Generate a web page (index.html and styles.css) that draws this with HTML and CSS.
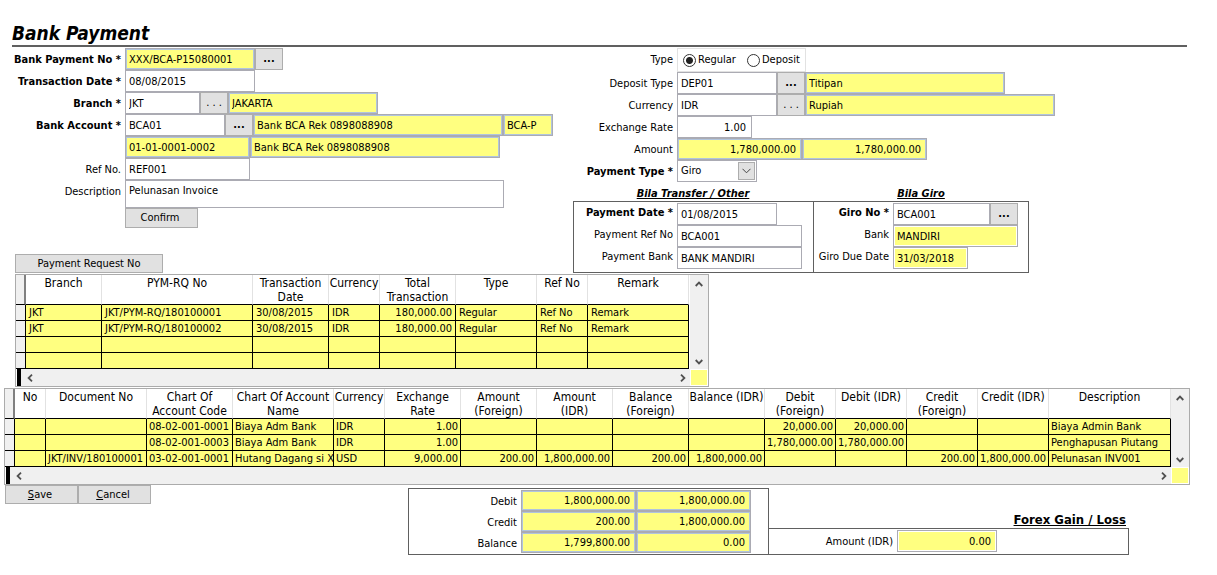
FILE: index.html
```
<!DOCTYPE html>
<html lang="en">
<head>
<meta charset="utf-8">
<title>Bank Payment</title>
<link rel="stylesheet" href="styles.css">
</head>
<body>
<header class="page-header"><h1>Bank Payment</h1></header>
<form>
<div class="top">
  <section class="left">
    <div class="form">
      <div class="row"><label class="label bold" for="no">Bank Payment No *</label><input class="field locked w130" id="no" value="XXX/BCA-P15080001" readonly><button type="button" class="btn dots bold">...</button></div>
      <div class="row"><label class="label bold" for="date">Transaction Date *</label><input class="field w130" id="date" value="08/08/2015"></div>
      <div class="row"><label class="label bold" for="branch">Branch *</label><input class="field w75" id="branch" value="JKT"><button type="button" class="btn dots">. . .</button><input class="field locked w150" aria-label="Branch name" value="JAKARTA" readonly></div>
      <div class="row"><label class="label bold" for="acct">Bank Account *</label><input class="field w100" id="acct" value="BCA01"><button type="button" class="btn dots bold">...</button><input class="field locked w250" aria-label="Bank account name" value="Bank BCA Rek 0898088908" readonly><input class="field locked w50" aria-label="Bank account code" value="BCA-P" readonly></div>
      <div class="row"><span class="label"></span><input class="field locked w125" aria-label="Chart of account" value="01-01-0001-0002" readonly><input class="field locked w250" aria-label="Chart of account name" value="Bank BCA Rek 0898088908" readonly></div>
      <div class="row"><label class="label" for="ref">Ref No.</label><input class="field w125" id="ref" value="REF001"></div>
      <div class="row"><label class="label" for="desc">Description</label><textarea class="field memo" id="desc">Pelunasan Invoice</textarea></div>
      <div class="row"><span class="label"></span><button type="button" class="btn confirm">Confirm</button></div>
    </div>
    <button type="button" class="btn request">Payment Request No</button>
  </section>

  <section class="right">
    <div class="row"><span class="label">Type</span>
      <div class="radios" role="radiogroup" aria-label="Type">
        <label><input type="radio" name="type" checked>Regular</label>
        <label><input type="radio" name="type">Deposit</label>
      </div>
    </div>
    <div class="row"><label class="label" for="dep">Deposit Type</label><input class="field w100" id="dep" value="DEP01"><button type="button" class="btn dots bold">...</button><input class="field locked w200" aria-label="Deposit type name" value="Titipan" readonly></div>
    <div class="row"><label class="label" for="cur">Currency</label><input class="field w100" id="cur" value="IDR"><button type="button" class="btn dots">. . .</button><input class="field locked w250" aria-label="Currency name" value="Rupiah" readonly></div>
    <div class="row"><label class="label" for="rate">Exchange Rate</label><input class="field num w75" id="rate" value="1.00"></div>
    <div class="row"><label class="label" for="amt">Amount</label><input class="field locked num w125" id="amt" value="1,780,000.00" readonly><input class="field locked num w125" aria-label="Amount (IDR)" value="1,780,000.00" readonly></div>
    <div class="row"><label class="label bold" for="ptype">Payment Type *</label>
      <div class="select"><select id="ptype" class="field"><option>Giro</option><option>Transfer</option></select>
        <span class="arrow"><svg viewBox="0 0 9 6" width="9" height="6"><path d="M.5.8l4 4 4-4" fill="none" stroke="#444"/></svg></span></div>
    </div>
    <div class="methods">
      <h2>Bila Transfer / Other</h2>
      <h2>Bila Giro</h2>
      <div class="method">
        <div class="row"><label class="label bold" for="pdate">Payment Date *</label><input class="field w100" id="pdate" value="01/08/2015"></div>
        <div class="row"><label class="label" for="pref">Payment Ref No</label><input class="field w125" id="pref" value="BCA001"></div>
        <div class="row"><label class="label" for="pbank">Payment Bank</label><input class="field w125" id="pbank" value="BANK MANDIRI"></div>
      </div>
      <div class="method giro">
        <div class="row"><label class="label bold" for="gno">Giro No *</label><input class="field w97" id="gno" value="BCA001"><button type="button" class="btn dots bold">...</button></div>
        <div class="row"><label class="label" for="gbank">Bank</label><input class="field locked pale w125" id="gbank" value="MANDIRI" readonly></div>
        <div class="row"><label class="label" for="gdue">Giro Due Date</label><input class="field locked pale w75" id="gdue" value="31/03/2018" readonly></div>
      </div>
    </div>
  </section>
</div>

<div class="grid requests">
  <table>
    <colgroup><col class="c10"><col class="c76"><col class="c151"><col class="c76"><col class="c51"><col class="c76"><col class="c81"><col class="c51"><col></colgroup>
    <thead><tr><th class="sel"></th><th>Branch</th><th>PYM-RQ No</th><th>Transaction Date</th><th>Currency</th><th>Total Transaction</th><th>Type</th><th>Ref No</th><th>Remark</th></tr></thead>
    <tbody>
      <tr><td class="sel"></td><td>JKT</td><td>JKT/PYM-RQ/180100001</td><td>30/08/2015</td><td>IDR</td><td class="num">180,000.00</td><td>Regular</td><td>Ref No</td><td>Remark</td></tr>
      <tr><td class="sel"></td><td>JKT</td><td>JKT/PYM-RQ/180100002</td><td>30/08/2015</td><td>IDR</td><td class="num">180,000.00</td><td>Regular</td><td>Ref No</td><td>Remark</td></tr>
      <tr><td class="sel"></td><td></td><td></td><td></td><td></td><td></td><td></td><td></td><td></td></tr>
      <tr><td class="sel"></td><td></td><td></td><td></td><td></td><td></td><td></td><td></td><td></td></tr>
    </tbody>
  </table>
  <div class="vbar">
    <svg viewBox="0 0 8 6" width="8" height="6"><path d="M.7 5L4 1.6 7.300 5" fill="none" stroke="#505050" stroke-width="1.800"/></svg>
    <svg viewBox="0 0 8 6" width="8" height="6"><path d="M.7 1L4 4.400 7.300 1" fill="none" stroke="#505050" stroke-width="1.800"/></svg>
  </div>
  <div class="hbar">
    <svg viewBox="0 0 6 8" width="6" height="8"><path d="M5 .7L1.600 4 5 7.300" fill="none" stroke="#505050" stroke-width="1.800"/></svg>
    <svg viewBox="0 0 6 8" width="6" height="8"><path d="M1 .7L4.400 4 1 7.300" fill="none" stroke="#505050" stroke-width="1.800"/></svg>
  </div>
  <div class="corner"></div>
</div>

<div class="grid details">
  <table>
    <colgroup><col class="c10"><col class="c31"><col class="c101"><col class="c86"><col class="c101"><col class="c51"><col class="c76"><col class="c76"><col class="c76"><col class="c76"><col class="c76"><col class="c71"><col class="c71"><col class="c71"><col class="c71"><col></colgroup>
    <thead><tr><th class="sel"></th><th>No</th><th>Document No</th><th>Chart Of<br>Account Code</th><th>Chart Of Account<br>Name</th><th>Currency</th><th>Exchange<br>Rate</th><th>Amount<br>(Foreign)</th><th>Amount<br>(IDR)</th><th>Balance<br>(Foreign)</th><th>Balance (IDR)</th><th>Debit<br>(Foreign)</th><th>Debit (IDR)</th><th>Credit<br>(Foreign)</th><th>Credit (IDR)</th><th>Description</th></tr></thead>
    <tbody>
      <tr><td class="sel"></td><td></td><td></td><td>08-02-001-0001</td><td>Biaya Adm Bank</td><td>IDR</td><td class="num">1.00</td><td></td><td></td><td></td><td></td><td class="num">20,000.00</td><td class="num">20,000.00</td><td></td><td></td><td>Biaya Admin Bank</td></tr>
      <tr><td class="sel"></td><td></td><td></td><td>08-02-001-0003</td><td>Biaya Adm Bank</td><td>IDR</td><td class="num">1.00</td><td></td><td></td><td></td><td></td><td class="num">1,780,000.00</td><td class="num">1,780,000.00</td><td></td><td></td><td>Penghapusan Piutang</td></tr>
      <tr><td class="sel"></td><td></td><td>JKT/INV/180100001</td><td>03-02-001-0001</td><td>Hutang Dagang si X</td><td>USD</td><td class="num">9,000.00</td><td class="num">200.00</td><td class="num">1,800,000.00</td><td class="num">200.00</td><td class="num">1,800,000.00</td><td></td><td></td><td class="num">200.00</td><td class="num">1,800,000.00</td><td>Pelunasan INV001</td></tr>
    </tbody>
  </table>
  <div class="vbar">
    <svg viewBox="0 0 8 6" width="8" height="6"><path d="M.7 5L4 1.600 7.300 5" fill="none" stroke="#505050" stroke-width="1.800"/></svg>
    <svg viewBox="0 0 8 6" width="8" height="6"><path d="M.7 1L4 4.400 7.300 1" fill="none" stroke="#505050" stroke-width="1.800"/></svg>
  </div>
  <div class="hbar">
    <svg viewBox="0 0 6 8" width="6" height="8"><path d="M5 .7L1.600 4 5 7.300" fill="none" stroke="#505050" stroke-width="1.800"/></svg>
    <svg viewBox="0 0 6 8" width="6" height="8"><path d="M1 .7L4.400 4 1 7.300" fill="none" stroke="#505050" stroke-width="1.800"/></svg>
  </div>
  <div class="corner"></div>
</div>

<footer class="bottom">
  <div class="actions">
    <button type="button" class="btn"><u>S</u>ave</button>
    <button type="button" class="btn"><u>C</u>ancel</button>
  </div>
  <div class="totals">
    <div class="row"><label class="label" for="tdeb">Debit</label><input class="field locked num w115" id="tdeb" value="1,800,000.00" readonly><input class="field locked num w115" aria-label="Debit (IDR)" value="1,800,000.00" readonly></div>
    <div class="row"><label class="label" for="tcre">Credit</label><input class="field locked num w115" id="tcre" value="200.00" readonly><input class="field locked num w115" aria-label="Credit (IDR)" value="1,800,000.00" readonly></div>
    <div class="row"><label class="label" for="tbal">Balance</label><input class="field locked num w115" id="tbal" value="1,799,800.00" readonly><input class="field locked num w115" aria-label="Balance (IDR)" value="0.00" readonly></div>
  </div>
  <div class="forex">
    <h2>Forex Gain / Loss</h2>
    <div class="row forex-box"><label class="label" for="fx">Amount (IDR)</label><input class="field locked pale num w100" id="fx" value="0.00" readonly></div>
  </div>
</footer>
</form>
</body>
</html>
```
FILE: styles.css
```
* { box-sizing: border-box; }
body {
  margin: 0;
  background: #fff;
  color: #000;
  font: 11px/14px "DejaVu Sans Condensed", "Noto Sans", sans-serif;
}
input, select, textarea, button { font: inherit; color: inherit; margin: 0; border-radius: 0; }
h1, h2 { margin: 0; }

.page-header { margin: 0 30px 1px 12px; padding-top: 21px; border-bottom: 2px solid #606060; }
.page-header h1 { font-size: 19px; line-height: 24px; font-style: italic; }

.top { display: grid; grid-template-columns: 573px 1fr; }
.left { display: flex; flex-direction: column; justify-content: space-between; align-items: flex-start; }
.row { display: flex; min-height: 22px; }
.label { flex: none; width: 125px; padding: 5px 4px 0 0; text-align: right; white-space: nowrap; }
.bold { font-weight: bold; }
.right .label { width: 104px; }

.field {
  flex: none;
  height: 22px;
  padding: 0 3px;
  border: 1px solid #ababb3;
  background: #fff;
  outline: none;
}
.locked { background: #ffff80; box-shadow: inset 0 0 0 1px #b0c4de; }
.pale { box-shadow: inset 0 0 0 1px #fff; }
.num { text-align: right; }
input.num { padding-right: 5px; }
.memo { width: 379px; height: 28px; padding: 3px; resize: none; overflow: hidden; }
.w50 { width: 50px; }
.w75 { width: 75px; }
.w97 { width: 97px; }
.w100 { width: 100px; }
.w115 { width: 115px; }
.w125 { width: 125px; }
.w130 { width: 130px; }
.w150 { width: 150px; }
.w200 { width: 200px; }
.w250 { width: 250px; }

.btn { padding: 0; border: 1px solid #adadad; background: #e1e1e1; text-align: center; }
.btn.bold { font-weight: bold; }
.dots { width: 28px; height: 22px; word-spacing: normal; }
.confirm { width: 73px; height: 20px; padding-right: 3px; }
.request { width: 148px; height: 19px; margin-left: 15px; }

.radios { display: flex; gap: 11px; width: 129px; height: 24px; padding-left: 5px; border: 1px solid #e2e2e2; }
.radios label { display: flex; align-items: center; gap: 2px; }
.radios input {
  appearance: none;
  width: 13px;
  height: 13px;
  border: 1px solid #333;
  border-radius: 50%;
  background: #fff;
}
.radios input:checked { background: radial-gradient(#222 0 3px, #fff 4px); }

.select { position: relative; width: 80px; }
.select select { width: 100%; appearance: none; }
.arrow {
  position: absolute;
  top: 2px;
  right: 2px;
  display: grid;
  place-items: center;
  width: 17px;
  height: 18px;
  border: 1px solid #adadad;
  background: #e1e1e1;
  pointer-events: none;
}

.methods { display: grid; grid-template-columns: 240px 216px; padding-top: 4px; }
.methods h2 { font-size: 11px; line-height: 15px; font-style: italic; text-align: center; text-decoration: underline; }
.method { padding: 1px 0 3px; border: 1px solid #606060; border-right: 0; }
.method .label { width: 103px; padding-top: 3px; }
.giro { border-right: 1px solid #606060; }
.giro .label { width: 79px; }

.grid { display: grid; grid-template-columns: 1fr 18px; border: 1px solid #ababab; background: #fff; }
.requests { width: 694px; margin: 1px 0 0 15px; }
.requests table { width: calc(100% - 1px); }
.details { min-width: 1186px; margin: 1px 27px 0 4px; }
table { width: 100%; border-collapse: separate; border-spacing: 0; table-layout: fixed; }
th {
  height: 30px;
  padding: 1px 0 0;
  border-right: 1px solid #e2e2e2;
  border-bottom: 1px solid #000;
  font-size: 12px;
  line-height: 14px;
  font-weight: normal;
  vertical-align: top;
}
.details th { white-space: nowrap; }
td {
  height: 16px;
  padding: 0 3px;
  border-right: 1px solid #000;
  border-bottom: 1px solid #000;
  background: #ffff80;
  white-space: nowrap;
}
.details td { padding: 0 2px; }
.sel { background: #f0f0f0; padding: 0; border-right: 1px solid #000; }
th.sel { border-right: 2px solid #808080; }
.c10 { width: 10px; }
.c31 { width: 31px; }
.c51 { width: 51px; }
.c71 { width: 71px; }
.c76 { width: 76px; }
.c81 { width: 81px; }
.c86 { width: 86px; }
.c101 { width: 101px; }
.c151 { width: 151px; }
.vbar { display: flex; flex-direction: column; justify-content: space-between; align-items: center; padding: 6px 0 4px; background: #f0f0f0; }
.hbar { display: flex; justify-content: space-between; align-items: center; height: 17px; margin-left: 1px; padding: 0 4px 0 6px; border-left: 4px solid #000; background: #f0f0f0; }
.corner { margin: 1px; background: #ffff80; }

.bottom { display: grid; grid-template-columns: 408px 361px 360px; align-items: start; }
.actions { display: flex; padding-left: 5px; }
.actions .btn { width: 73px; height: 19px; padding-right: 3px; }
.totals { margin-top: 3px; padding: 1px 0; border: 1px solid #606060; }
.totals .row { min-height: 21px; }
.totals .field { height: 21px; }
.totals .label { width: 112px; }
.forex { padding-top: 27px; }
.forex h2 { padding-right: 3px; font-size: 13px; line-height: 16px; text-align: right; text-decoration: underline; }
.forex-box { padding: 1px 0 2px; border: 1px solid #606060; border-left: 0; }
.forex-box .label { width: 128px; }
```
